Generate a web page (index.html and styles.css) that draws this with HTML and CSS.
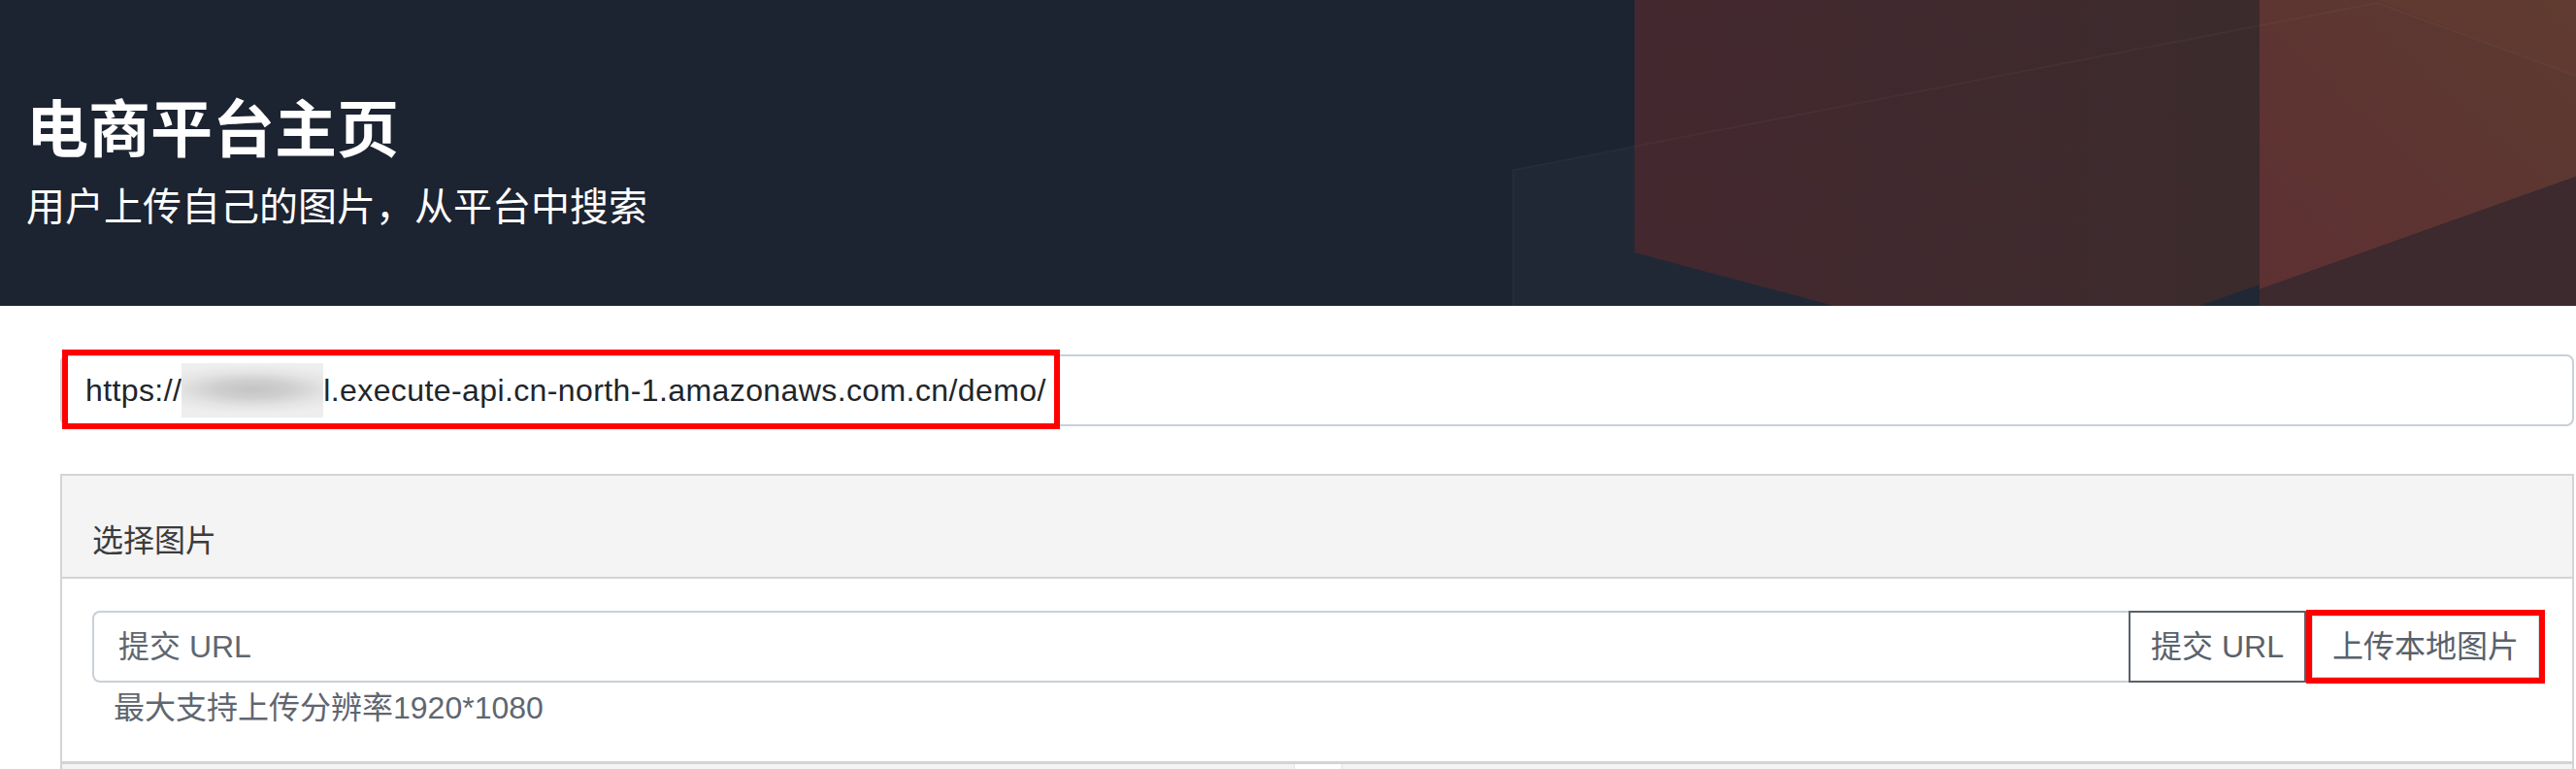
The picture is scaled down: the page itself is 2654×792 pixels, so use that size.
FILE: index.html
```html
<!DOCTYPE html>
<html lang="zh-CN">
<head>
<meta charset="utf-8">
<title>电商平台主页</title>
<link rel="stylesheet" href="styles.css">
</head>
<body>
<header class="hero">
  <svg class="hero-bg" viewBox="0 0 2654 315" preserveAspectRatio="none" aria-hidden="true">
    <defs>
      <linearGradient id="gA" x1="0" y1="0" x2="1" y2="0">
        <stop offset="0" stop-color="#44282f"/>
        <stop offset="1" stop-color="#3b2b2d"/>
      </linearGradient>
      <linearGradient id="gB" x1="0" y1="1" x2="1" y2="0">
        <stop offset="0" stop-color="#5e3033"/>
        <stop offset="1" stop-color="#5c3a30"/>
      </linearGradient>
    </defs>
    <polygon points="1559,175 2449,3 2654,78 2654,315 1559,315" fill="#ffffff" fill-opacity="0.025"/>
    <polygon points="1684,0 2328,0 2328,293 2265,315 1890,315 1684,260" fill="url(#gA)"/>
    <polygon points="2328,0 2654,0 2654,182 2328,298" fill="url(#gB)"/>
    <polygon points="2449,0 2654,0 2654,78" fill="#633c31" fill-opacity="0.6"/>
    <polygon points="2328,298 2654,182 2654,315 2328,315" fill="#3c2a2f"/>
    <polyline points="1559,315 1559,175 2449,3 2654,78" fill="none" stroke="#ffffff" stroke-opacity="0.03" stroke-width="2"/>
  </svg>
  <div class="hero-text">
    <h1 class="hero-title">电商平台主页</h1>
    <p class="hero-lead">用户上传自己的图片，从平台中搜索</p>
  </div>
</header>

<main class="page">
  <div class="endpoint">
    <div class="endpoint-field">https://<span class="masked"></span>l.execute-api.cn-north-1.amazonaws.com.cn/demo/</div>
    <span class="annot annot-url"></span>
  </div>

  <section class="card">
    <div class="card-header">选择图片</div>
    <div class="card-body">
      <div class="input-group">
        <div class="url-field">提交 URL</div>
        <button class="btn btn-outline">提交 URL</button>
        <button class="btn btn-upload">上传本地图片</button>
      </div>
      <p class="help-text">最大支持上传分辨率1920*1080</p>
    </div>
  </section>

  <section class="card-next">
    <span class="next-tab"></span>
  </section>
</main>
</body>
</html>
```

FILE: styles.css
```css
html, body {
  margin: 0;
  padding: 0;
  background: #ffffff;
}

body {
  width: 2654px;
  font-family: "Liberation Sans", "Noto Sans CJK SC", sans-serif;
  overflow: hidden;
}

/* ---------- hero ---------- */
.hero {
  position: relative;
  height: 315px;
  background: #1c2331;
  overflow: hidden;
}

.hero-bg {
  position: absolute;
  left: 0;
  top: 0;
  width: 2654px;
  height: 315px;
}

.hero-text {
  position: relative;
  padding: 90px 0 0 30px;
  color: #ffffff;
  font-family: "Noto Sans CJK SC", sans-serif;
}

.hero-title {
  margin: 0 0 13px -3px;
  font-size: 64px;
  line-height: 1.2;
  font-weight: 700;
}

.hero-lead {
  margin: 0 0 0 -3px;
  font-size: 40px;
  line-height: 1.5;
  font-weight: 400;
}

/* ---------- page ---------- */
.page {
  padding: 0 2px 0 62px;
}

.endpoint {
  position: relative;
  margin-top: 50px;
}

.endpoint-field {
  height: 74px;
  box-sizing: border-box;
  border: 2px solid #c9d0d8;
  border-radius: 8px;
  padding: 0 24px;
  font-size: 32px;
  letter-spacing: 0.4px;
  line-height: 70px;
  color: #212529;
  white-space: nowrap;
}

.masked {
  display: inline-block;
  width: 146px;
  height: 56px;
  vertical-align: middle;
  margin: -6px 0 0 0;
  background: radial-gradient(ellipse 75% 45% at 50% 48%, #c4c4c4 0%, #cfcfcf 35%, #e4e4e4 70%, #eeeeee 100%);
}

.annot {
  position: absolute;
  box-sizing: border-box;
  border: 6px solid #ff0000;
  pointer-events: none;
}

.annot-url {
  left: 2px;
  top: -5px;
  width: 1028px;
  height: 82px;
}

/* ---------- card ---------- */
.card {
  margin-top: 49px;
  border: 2px solid #d4d4d4;
  background: #ffffff;
}

.card-header {
  background: #f4f4f4;
  border-bottom: 2px solid #d4d4d4;
  padding: 40px 31px 16px;
  font-family: "Noto Sans CJK SC", sans-serif;
  font-size: 32px;
  line-height: 48px;
  color: #3c3c3c;
}

.card-body {
  padding: 33px 28px 31px 31px;
}

.input-group {
  display: flex;
  height: 74px;
}

.url-field {
  flex: 1;
  box-sizing: border-box;
  border: 2px solid #c9d0d8;
  border-right: none;
  border-radius: 8px 0 0 8px;
  padding: 0 25px;
  font-size: 32px;
  line-height: 70px;
  color: #5f6670;
}

.btn {
  box-sizing: border-box;
  height: 74px;
  margin: 0;
  background: #ffffff;
  font-family: "Liberation Sans", "Noto Sans CJK SC", sans-serif;
  font-size: 32px;
  line-height: 1;
  color: #59616a;
  padding: 0;
  cursor: pointer;
}

.btn-outline {
  width: 183px;
  border: 2px solid #59616a;
}

.btn-upload {
  width: 246px;
  height: 76px;
  margin-top: -1px;
  border: 6px solid #ff0000;
  box-shadow: inset 0 0 0 1px #d9d9d9;
}

.help-text {
  margin: 2px 0 0 22px;
  font-size: 32px;
  line-height: 48px;
  color: #5f6670;
}

/* ---------- next card (cut off) ---------- */
.card-next {
  border-top: 1px solid #d4d4d4;
  border-left: 2px solid #d4d4d4;
  border-right: 2px solid #d4d4d4;
  background: #f4f4f4;
  height: 40px;
}

.next-tab {
  display: block;
  margin-left: 1269px;
  width: 48px;
  height: 40px;
  background: #ffffff;
  border-left: 1px solid #e2e2e2;
  border-right: 1px solid #e2e2e2;
}
```
